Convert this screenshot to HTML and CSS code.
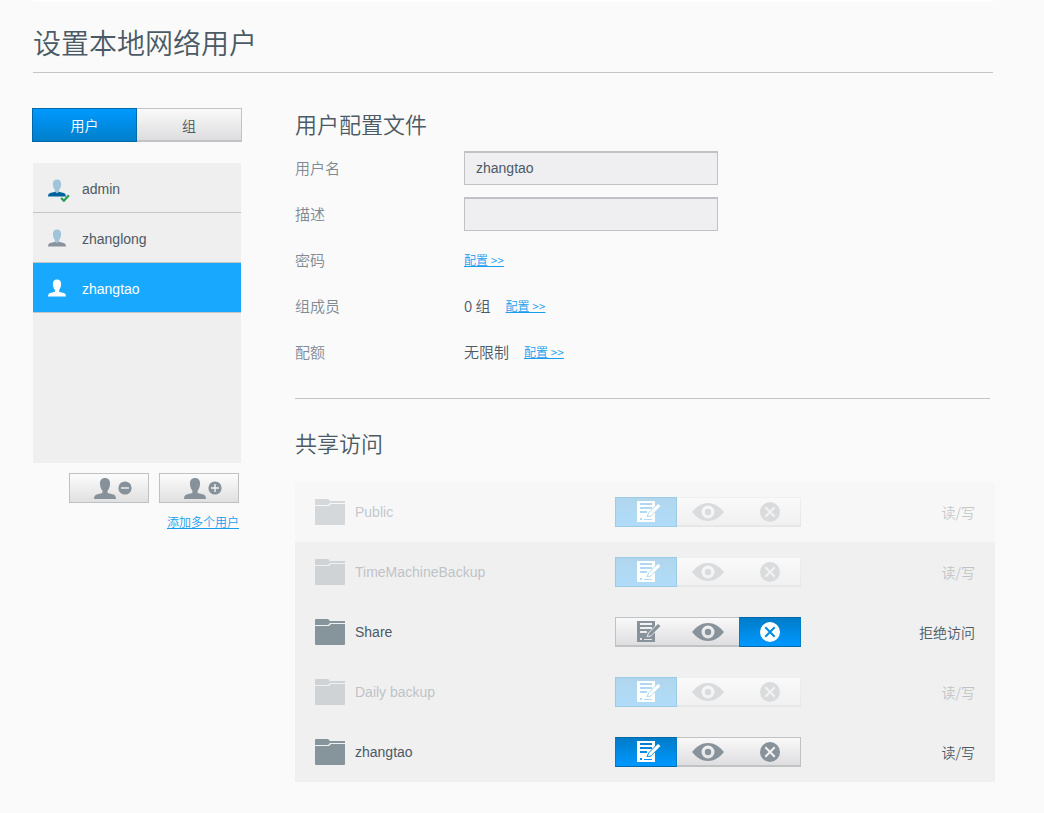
FILE: index.html
```
<!DOCTYPE html>
<html lang="zh-CN">
<head>
<meta charset="utf-8">
<title>设置本地网络用户</title>
<link rel="stylesheet" href="styles.css">
</head>
<body>
<svg class="sprite" aria-hidden="true">
  <symbol id="person" viewBox="0 0 21 20">
    <path class="head" d="M10.500 0C7.300 0 5.500 2.300 5.700 5.500C5.800 8.500 6.800 10.800 8 12V17H13V12C14.200 10.800 15.200 8.500 15.300 5.500C15.500 2.300 13.700 0 10.500 0Z"/>
    <path class="torso" d="M0 20C0 17.300 1 16 3.500 15.400C6 14.900 7 14.800 8 14.300L10.500 16L13 14.300C14 14.800 15 14.900 17.500 15.400C20 16 21 17.300 21 20Z"/>
  </symbol>
  <symbol id="folder" viewBox="0 0 30 26">
    <path d="M0 1Q0 0 1 0H13L15 2H30V4H15L13 6H0Z"/>
    <path d="M0 7H14L16 5H30V25Q30 26 29 26H1Q0 26 0 25Z"/>
  </symbol>
  <symbol id="edit" viewBox="0 0 24 22">
    <path fill-rule="evenodd" d="M0 0H18V5L11 12L9.500 16H13L18 11.500V21H0ZM3 2V4H15V2ZM3 6V8H15V6ZM3 10V12H10V10ZM3 17V19H5V17ZM7 18V19H15V18Z"/>
    <path d="M21 3L23.500 5L14.500 14L11 15.500L12 12Z"/>
  </symbol>
  <symbol id="eye" viewBox="0 0 32 18">
    <path fill-rule="evenodd" d="M0 9C5 3 10 0 16 0S27 3 32 9C27 15 22 18 16 18S5 15 0 9ZM16 2.500A6.500 6.500 0 1 0 16 15.500A6.500 6.500 0 1 0 16 2.500Z"/>
    <circle cx="16" cy="9" r="3.200"/>
  </symbol>
  <symbol id="deny" viewBox="0 0 20 20">
    <circle cx="10" cy="10" r="10"/>
    <path class="mark" d="M5.300 5.300L14.700 14.700M14.700 5.300L5.300 14.700"/>
  </symbol>
  <symbol id="minus" viewBox="0 0 14 14">
    <circle cx="7" cy="7" r="6.600"/>
    <path class="mark thin" d="M3 7H11"/>
  </symbol>
  <symbol id="plus" viewBox="0 0 14 14">
    <circle cx="7" cy="7" r="6.600"/>
    <path class="mark thin" d="M3 7H11M7 3V11"/>
  </symbol>
</svg>

<div class="page">
  <header class="page-header"><h1>设置本地网络用户</h1></header>
  <div class="columns">
    <aside class="sidebar">
      <div class="tabs">
        <button class="tab active" type="button">用户</button>
        <button class="tab" type="button">组</button>
      </div>
      <div class="user-list">
        <button class="user admin" type="button">
          <span class="avatar"><svg class="user-icon"><use href="#person"/></svg><svg class="check" viewBox="0 0 9 7"><path d="M1 3.500L3.500 6L8 1"/></svg></span>
          admin
        </button>
        <button class="user" type="button">
          <span class="avatar"><svg class="user-icon"><use href="#person"/></svg></span>
          zhanglong
        </button>
        <button class="user selected" type="button">
          <span class="avatar"><svg class="user-icon"><use href="#person"/></svg></span>
          zhangtao
        </button>
      </div>
      <div class="actions">
        <button class="action" type="button" aria-label="删除用户"><svg class="action-person"><use href="#person"/></svg><svg class="action-sign"><use href="#minus"/></svg></button>
        <button class="action" type="button" aria-label="添加用户"><svg class="action-person"><use href="#person"/></svg><svg class="action-sign"><use href="#plus"/></svg></button>
      </div>
      <div class="more"><a class="link" href="#">添加多个用户</a></div>
    </aside>

    <main class="content">
      <section class="profile">
        <h2>用户配置文件</h2>
        <div class="field"><label class="label" for="username">用户名</label><input class="input" id="username" type="text" value="zhangtao"></div>
        <div class="field"><label class="label" for="description">描述</label><input class="input" id="description" type="text"></div>
        <div class="field"><span class="label">密码</span><a class="link" href="#">配置 &gt;&gt;</a></div>
        <div class="field"><span class="label">组成员</span><span class="value">0 组</span><a class="link" href="#">配置 &gt;&gt;</a></div>
        <div class="field"><span class="label">配额</span><span class="value">无限制</span><a class="link" href="#">配置 &gt;&gt;</a></div>
      </section>

      <section class="sharing">
        <h2>共享访问</h2>
        <ul class="shares">
          <li class="share public disabled">
            <svg class="folder"><use href="#folder"/></svg><span class="name">Public</span>
            <div class="segments">
              <button class="segment on" type="button" aria-label="读/写" disabled><svg class="edit"><use href="#edit"/></svg></button>
              <button class="segment" type="button" aria-label="只读" disabled><svg class="eye"><use href="#eye"/></svg></button>
              <button class="segment" type="button" aria-label="拒绝访问" disabled><svg class="deny"><use href="#deny"/></svg></button>
            </div>
            <span class="access">读/写</span>
          </li>
          <li class="share disabled">
            <svg class="folder"><use href="#folder"/></svg><span class="name">TimeMachineBackup</span>
            <div class="segments">
              <button class="segment on" type="button" aria-label="读/写" disabled><svg class="edit"><use href="#edit"/></svg></button>
              <button class="segment" type="button" aria-label="只读" disabled><svg class="eye"><use href="#eye"/></svg></button>
              <button class="segment" type="button" aria-label="拒绝访问" disabled><svg class="deny"><use href="#deny"/></svg></button>
            </div>
            <span class="access">读/写</span>
          </li>
          <li class="share">
            <svg class="folder"><use href="#folder"/></svg><span class="name">Share</span>
            <div class="segments">
              <button class="segment" type="button" aria-label="读/写"><svg class="edit"><use href="#edit"/></svg></button>
              <button class="segment" type="button" aria-label="只读"><svg class="eye"><use href="#eye"/></svg></button>
              <button class="segment on" type="button" aria-label="拒绝访问"><svg class="deny"><use href="#deny"/></svg></button>
            </div>
            <span class="access">拒绝访问</span>
          </li>
          <li class="share disabled">
            <svg class="folder"><use href="#folder"/></svg><span class="name">Daily backup</span>
            <div class="segments">
              <button class="segment on" type="button" aria-label="读/写" disabled><svg class="edit"><use href="#edit"/></svg></button>
              <button class="segment" type="button" aria-label="只读" disabled><svg class="eye"><use href="#eye"/></svg></button>
              <button class="segment" type="button" aria-label="拒绝访问" disabled><svg class="deny"><use href="#deny"/></svg></button>
            </div>
            <span class="access">读/写</span>
          </li>
          <li class="share">
            <svg class="folder"><use href="#folder"/></svg><span class="name">zhangtao</span>
            <div class="segments">
              <button class="segment on" type="button" aria-label="读/写"><svg class="edit"><use href="#edit"/></svg></button>
              <button class="segment" type="button" aria-label="只读"><svg class="eye"><use href="#eye"/></svg></button>
              <button class="segment" type="button" aria-label="拒绝访问"><svg class="deny"><use href="#deny"/></svg></button>
            </div>
            <span class="access">读/写</span>
          </li>
        </ul>
      </section>
    </main>
  </div>
</div>
</body>
</html>
```

FILE: styles.css
```
* { box-sizing: border-box; }

body {
  --cjk: "Noto Sans CJK SC", sans-serif;
  --cjk-weight: 350;
  margin: 0;
  background: #fafafb;
  color: #4b5a64;
  font-family: "Liberation Sans", var(--cjk);
  font-size: 14px;
  line-height: 20px;
}

button, input { font: inherit; color: inherit; }
button { padding: 0; cursor: pointer; }
svg { display: block; fill: currentColor; }
.sprite { position: absolute; width: 0; height: 0; }

.page { padding: 0 49px 31px 32px; }

.page-header {
  margin: 0 2px 0 1px;
  padding: 20px 0 10px;
  border-top: 2px solid #fff;
  border-bottom: 1px solid #c4c4c8;
}

h1, h2 {
  margin: 0;
  font-family: var(--cjk);
  font-weight: var(--cjk-weight);
}
h1 { font-size: 28px; line-height: 40px; }
h2 { font-size: 22px; line-height: 30px; }

.columns { display: flex; gap: 53px; padding-top: 35px; }
.sidebar { flex: 0 0 210px; }
.content { flex: 1; min-width: 0; }

.tabs { display: grid; grid-template-columns: 1fr 1fr; height: 34px; }
.tab {
  border: 1px solid #c3c3c6;
  border-bottom-width: 2px;
  border-left: 0;
  background: linear-gradient(#fafafa, #dddddf);
  font-family: var(--cjk);
  font-weight: var(--cjk-weight);
}
.tab.active {
  border: 1px solid #0068a8;
  background: linear-gradient(#0099ff, #007fca);
  color: #fff;
}

.user-list {
  min-height: 300px;
  margin: 21px 1px 10px;
  background: #efefef;
}
.user {
  display: flex;
  align-items: center;
  gap: 16px;
  width: 100%;
  height: 50px;
  padding: 2px 15px 0;
  border: 0;
  border-bottom: 1px solid #c4c6c8;
  background: none;
  color: #4b5a64;
}
.user.selected { background: #18a9ff; color: #fff; }
.avatar { --head: #a0c4d9; position: relative; width: 18px; color: #8a939d; }
.user-icon { width: 18px; height: 18px; margin-top: -2px; }
.admin .avatar { color: #00629b; }
.selected .avatar { --head: #fff; color: #fff; }
.head { fill: var(--head, currentColor); }
.check {
  position: absolute;
  right: -4px;
  bottom: -5px;
  width: 10px;
  height: 8px;
  fill: none;
  stroke: #2d9d57;
  stroke-width: 2;
}

.actions { display: flex; justify-content: flex-end; gap: 10px; padding-right: 3px; }
.action {
  display: flex;
  align-items: center;
  justify-content: center;
  gap: 2px;
  width: 80px;
  height: 30px;
  padding-left: 7px;
  border: 1px solid #bfc0c2;
  background: linear-gradient(#fcfcfc, #e0e0e1);
  color: #86919a;
}
.action-person { width: 22px; height: 21px; }
.action-sign { width: 14px; height: 14px; }
.mark { fill: none; stroke: var(--mark, #f3f3f4); stroke-width: 2; }
.mark.thin { stroke-width: 1.4; }
.more { padding: 9px 3px 0 0; text-align: right; }

.link {
  color: #189eee;
  font-family: var(--cjk);
  font-size: 12px;
  font-weight: var(--cjk-weight);
}

.profile {
  padding-bottom: 23px;
  margin-right: 5px;
  border-bottom: 1px solid #c4c4c8;
}
.profile h2 { margin-bottom: 7px; }
.field { display: flex; align-items: center; height: 46px; }
.label {
  flex: 0 0 169px;
  color: #7f8a92;
  font-family: var(--cjk);
  font-size: 15px;
  font-weight: var(--cjk-weight);
}
.value {
  margin-right: 15px;
  font-family: var(--cjk);
  font-size: 15px;
  font-weight: var(--cjk-weight);
}
.input {
  width: 254px;
  height: 34px;
  padding: 0 11px 2px;
  border: 1px solid #c3c1c6;
  border-top-width: 2px;
  border-radius: 0;
  background: #efeef0;
}

.sharing { padding-top: 28px; }
.shares { margin: 25px 0 0; padding: 0; list-style: none; }
.share {
  display: grid;
  grid-template-columns: 30px minmax(0, 250px) 186px 1fr;
  align-items: center;
  gap: 10px;
  height: 60px;
  padding: 0 20px;
  background: #f0f0f1;
}
.share.public { background: #f7f7f8; }
.folder { width: 30px; height: 26px; color: #86949b; }
.access {
  text-align: right;
  font-family: var(--cjk);
  font-weight: var(--cjk-weight);
}
.segments {
  display: grid;
  grid-template-columns: 1fr 1fr 1fr;
  height: 30px;
  background: linear-gradient(#fafafb, #dcdcde);
}
.segment {
  display: flex;
  align-items: center;
  justify-content: center;
  border: 0 solid #c0c2c4;
  border-width: 1px 0 2px;
  background: none;
  color: #87929a;
}
.segment:first-child { border-left-width: 1px; }
.segment:last-child { border-right-width: 1px; }
.segment.on {
  border: 1px solid #0068aa;
  border-left-color: #007cc8;
  border-right-color: #007cc8;
  background: linear-gradient(#007cc8, #0098ff);
  color: #fff;
}
.segment.on .deny { --mark: #008be2; }
.edit { width: 24px; height: 22px; }
.segment .edit { margin-left: 5px; }
.eye { width: 32px; height: 18px; }
.deny { width: 20px; height: 20px; }
.disabled .folder, .disabled .name, .disabled .access { opacity: 0.3; }
.disabled .segments { background: linear-gradient(#fafafb, #f0f0f1); }
.disabled .segment {
  border-color: rgba(192, 194, 196, 0.2);
  color: #d9dbdd;
}
.disabled .segment.on {
  border-color: #9dcbe6;
  background: linear-gradient(#b0d6ed, #b0dcf9);
  color: #fff;
}
```
